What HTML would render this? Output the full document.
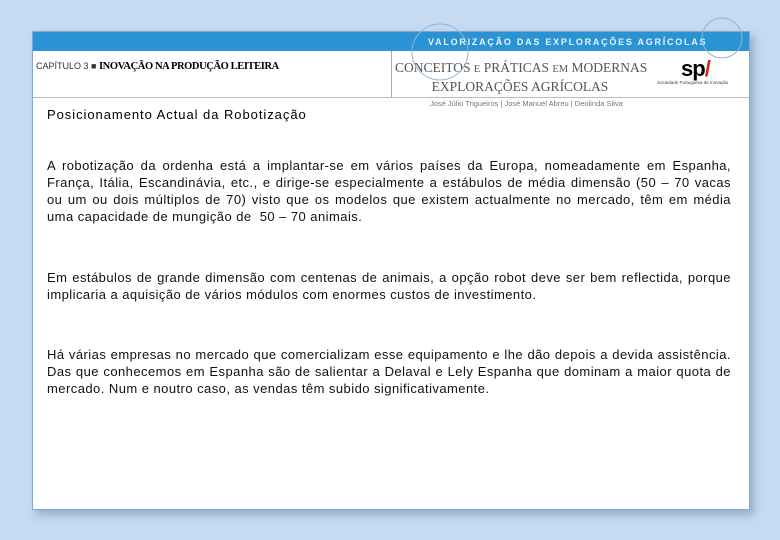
<!DOCTYPE html>
<html><head><meta charset="utf-8"><style>
html,body{margin:0;padding:0}
body{width:780px;height:540px;background:#c6daf1;position:relative;overflow:hidden;font-family:"Liberation Sans",sans-serif}
.card{position:absolute;left:32px;top:31px;width:716px;height:477px;background:#fff;border:1px solid #7ea9d2;box-shadow:4px 5px 8px rgba(60,90,130,.35)}
.bar{position:absolute;left:0;top:0;width:716px;height:19px;background:#2a93d4}
.bar span{position:absolute;left:395px;top:5px;color:#e8f4fc;font-size:9px;font-weight:bold;letter-spacing:1.75px;white-space:nowrap}
.hdr{position:absolute;left:0;top:19px;width:716px;height:46px;border-bottom:1px solid #bbb}
.div{position:absolute;left:358px;top:19px;width:1px;height:46px;background:#aaa}
.cap{position:absolute;left:3px;top:29px;font-size:9px;color:#333;white-space:nowrap}
.cap b{font-family:"Liberation Serif",serif;font-size:10.5px;color:#000;letter-spacing:-.4px}
.t{position:absolute;left:362px;top:27px;width:250px;text-align:center;font-family:"Liberation Serif",serif;font-size:13.5px;color:#555;line-height:17px;white-space:nowrap}
.t small{font-size:10.5px}
.spi{position:absolute;left:648px;top:24px;font-weight:bold;font-size:22px;color:#000;letter-spacing:-1px}
.spi i{color:#d62020;font-style:normal}
.soc{position:absolute;left:624px;top:48px;font-size:4.5px;color:#444;white-space:nowrap}
.auth{position:absolute;left:397px;top:67px;font-size:7.5px;color:#777;white-space:nowrap}
h1{position:absolute;left:14px;top:75px;margin:0;font-size:13px;font-weight:normal;color:#000;letter-spacing:.95px}
.p{position:absolute;left:14px;width:684px;text-align:justify;font-size:13px;letter-spacing:.45px;line-height:17px;color:#111}
</style></head><body>
<div class="card">
<div class="bar"><span>VALORIZAÇÃO DAS EXPLORAÇÕES AGRÍCOLAS</span></div>
<div class="hdr"></div><div class="div"></div>
<div class="cap">CAPÍTULO 3 ■ <b>INOVAÇÃO NA PRODUÇÃO LEITEIRA</b></div>
<div class="t">CONCEITOS <small>E</small> PRÁTICAS <small>EM</small> MODERNAS<br>EXPLORAÇÕES AGRÍCOLAS</div>
<div class="spi">sp<i>/</i></div>
<div class="soc">Sociedade Portuguesa de Inovação</div>
<div class="auth">José Júlio Trigueiros | José Manuel Abreu | Deolinda Silva</div>
<h1>Posicionamento Actual da Robotização</h1>
<div class="p" style="top:125px">A robotização da ordenha está a implantar-se em vários países da Europa, nomeadamente em Espanha, França, Itália, Escandinávia, etc., e dirige-se especialmente a estábulos de média dimensão (50 – 70 vacas ou um ou dois múltiplos de 70) visto que os modelos que existem actualmente no mercado, têm em média uma capacidade de mungição de&nbsp; 50 – 70 animais.</div>
<div class="p" style="top:237px">Em estábulos de grande dimensão com centenas de animais, a opção robot deve ser bem reflectida, porque implicaria a aquisição de vários módulos com enormes custos de investimento.</div>
<div class="p" style="top:314px">Há várias empresas no mercado que comercializam esse equipamento e lhe dão depois a devida assistência. Das que conhecemos em Espanha são de salientar a Delaval e Lely Espanha que dominam a maior quota de mercado. Num e noutro caso, as vendas têm subido significativamente.</div>
</div>
<svg style="position:absolute;left:0;top:0" width="780" height="540" fill="none" stroke="#8fb3d6" stroke-width="1">
<circle cx="440" cy="52" r="28"/><circle cx="722" cy="38" r="20"/>
</svg>
</body></html>
